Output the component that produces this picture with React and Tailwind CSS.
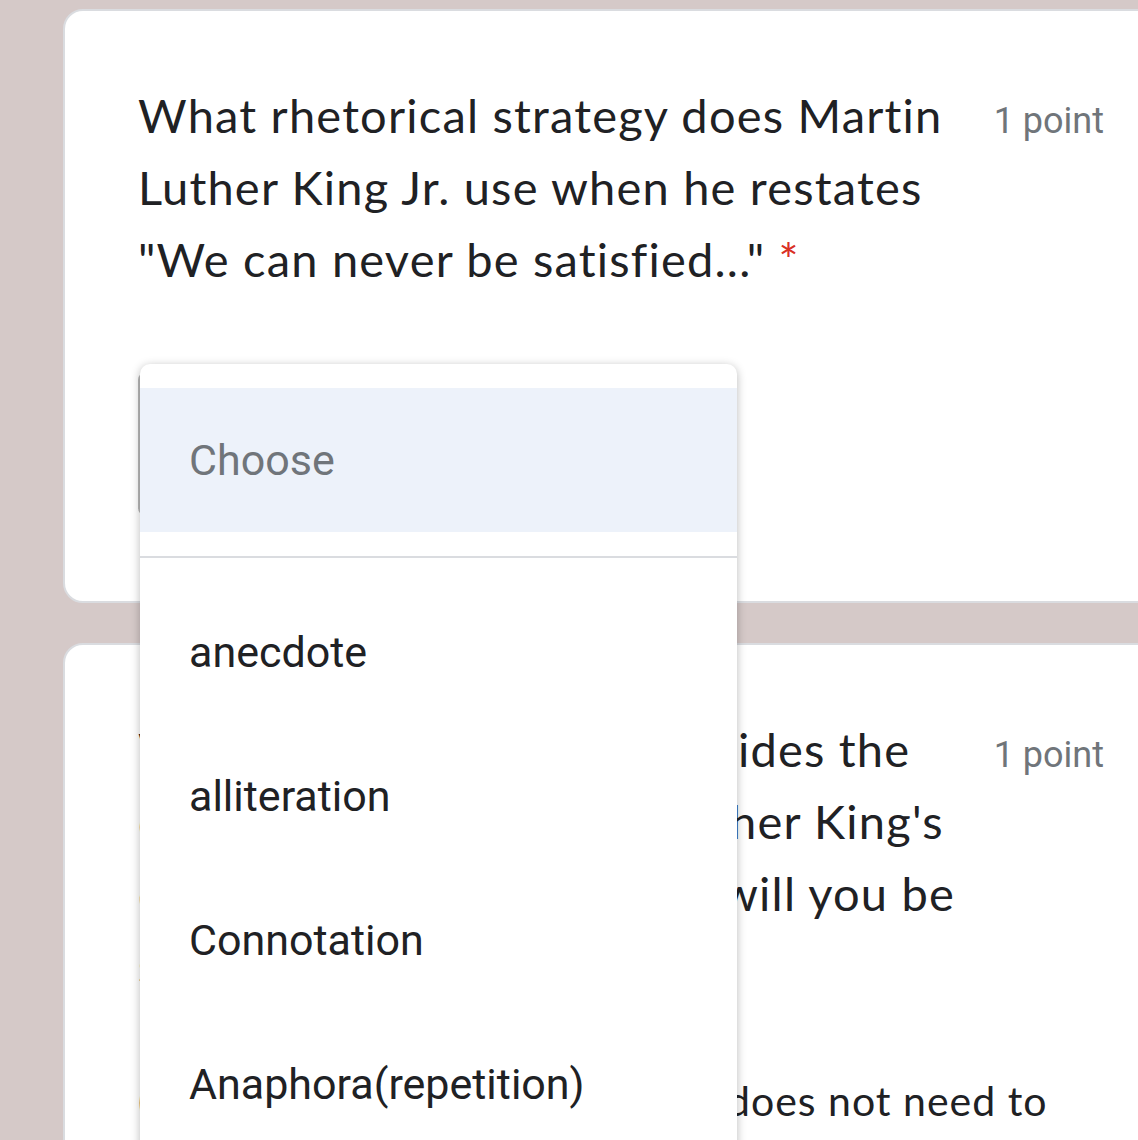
const options = ["anecdote", "alliteration", "Connotation", "Anaphora(repetition)"];

const titleFont = { fontFamily: "Lato, 'Open Sans', sans-serif" };

function Points() {
  return (
    <span className="shrink-0 font-['Roboto',sans-serif] text-[36px] text-[#70757a]">
      1 point
    </span>
  );
}

// hidden start of a line (sits under the open menu)
function Cut({ w, children }) {
  return (
    <span className={`inline-block overflow-hidden whitespace-nowrap align-bottom ${w}`}>
      {children}
    </span>
  );
}

export default function App() {
  return (
    <div className="relative h-[1140px] w-[1138px] overflow-hidden bg-[#d5c9c8] pl-[63px] pt-[9px]">
      <section className="h-[594px] w-[1120px] rounded-[20px] border-2 border-[#dadce0] bg-white pl-[73px] pr-[77px] pt-[68px]">
        <div className="flex items-baseline justify-between">
          <h2
            className="w-[820px] text-[47px] font-normal leading-[72px] tracking-[1.2px] text-[#202124]"
            style={titleFont}
          >
            What rhetorical strategy does Martin Luther King Jr. use when he restates "We can never be satisfied..."{" "}
            <span className="text-[#d93025]">*</span>
          </h2>
          <Points />
        </div>
        <div className="mt-[77px] h-[144px] w-[598px] rounded-[8px] border-2 border-[#b8b8b8]" />
      </section>

      <section className="mt-[40px] h-[600px] w-[1120px] rounded-[20px] border-2 border-[#dadce0] bg-white pl-[73px] pr-[77px] pt-[68px]">
        <div className="flex items-baseline justify-between">
          <h2
            className="text-[47px] font-normal leading-[72px] tracking-[1.2px] text-[#202124]"
            style={titleFont}
          >
            <span className="block">
              <Cut w="w-[600px]">What statement best prov</Cut>ides the
            </span>
            <span className="block">
              <Cut w="w-[592px]">of Martin Lut</Cut>her King's
            </span>
            <span className="block">
              <Cut w="w-[583px]">question "When </Cut>will you be
            </span>
            <span className="block">satisfied?"</span>
          </h2>
          <Points />
        </div>
        <p className="mt-[64px] text-[41px] leading-[72px] tracking-[1px] text-[#202124]" style={titleFont}>
          <Cut w="w-[589px]">(Your answer </Cut>does not need to
        </p>
      </section>

      <div className="absolute left-[140px] top-[364px] h-[820px] w-[597px] rounded-t-[10px] bg-white pt-[24px] font-['Roboto',sans-serif] shadow-[0_2px_10px_rgba(0,0,0,0.28)]">
        <div className="flex h-[144px] items-center bg-[#edf2fa] pl-[49px] text-[43px] text-[#70757a]">
          Choose
        </div>
        <div className="mt-[24px] h-[2px] bg-[#dadce0]" />
        <ul className="pt-[22px]">
          {options.map((opt) => (
            <li
              key={opt}
              className="flex h-[144px] items-center pl-[49px] text-[43px] text-[#202124]"
            >
              {opt}
            </li>
          ))}
        </ul>
      </div>
    </div>
  );
}
